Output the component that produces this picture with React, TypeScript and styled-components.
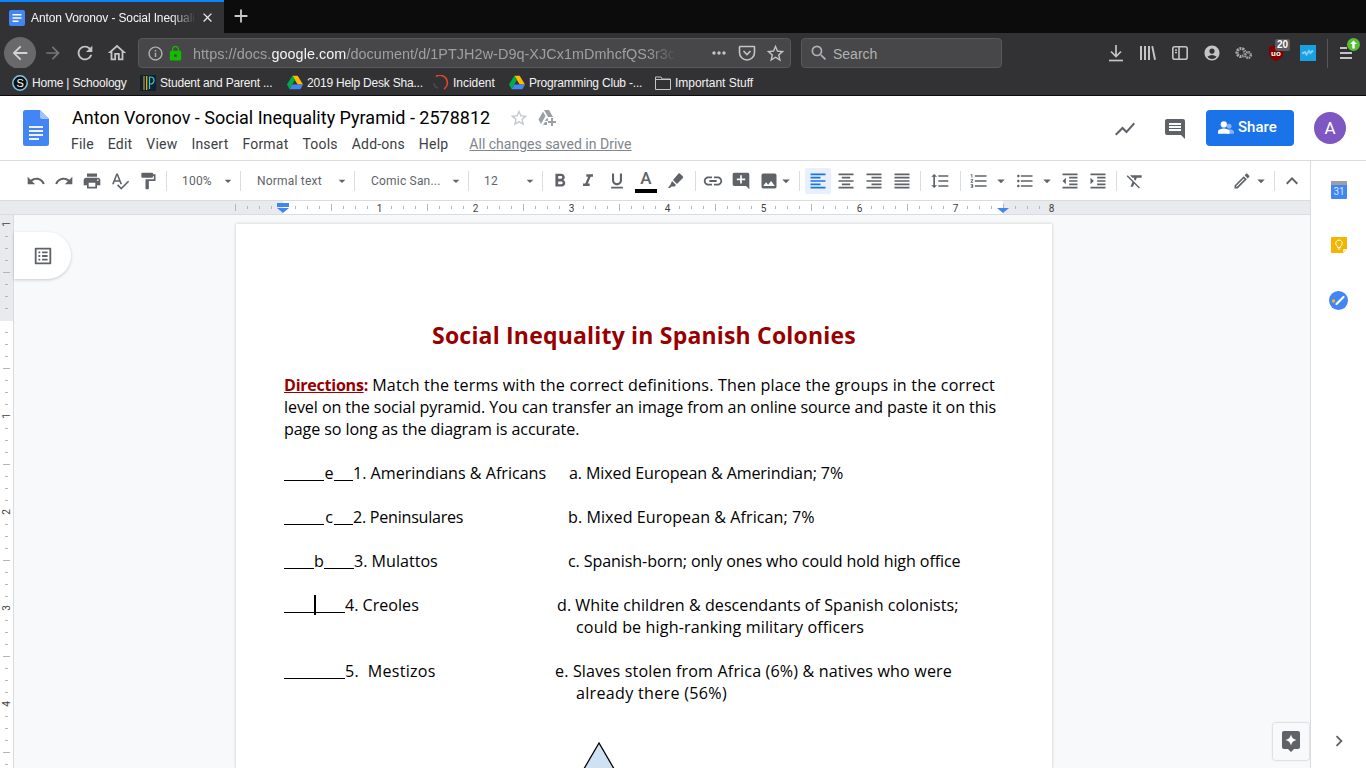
import React from "react";
import styled, { createGlobalStyle } from "styled-components";
import {
  MdArrowBack,
  MdArrowForward,
  MdRefresh,
  MdOutlineHome,
  MdInfoOutline,
  MdLock,
  MdMoreHoriz,
  MdStarBorder,
  MdSearch,
  MdAccountCircle,
  MdClose,
  MdAdd,
  MdUndo,
  MdRedo,
  MdPrint,
  MdSpellcheck,
  MdFormatPaint,
  MdFormatBold,
  MdFormatItalic,
  MdFormatUnderlined,
  MdLink,
  MdAddComment,
  MdImage,
  MdFormatAlignLeft,
  MdFormatAlignCenter,
  MdFormatAlignRight,
  MdFormatAlignJustify,
  MdFormatLineSpacing,
  MdFormatListNumbered,
  MdFormatListBulleted,
  MdFormatIndentDecrease,
  MdFormatIndentIncrease,
  MdFormatClear,
  MdOutlineEdit,
  MdExpandLess,
  MdShowChart,
  MdInsertComment,
  MdArrowDropDown,
  MdOutlineListAlt,
  MdChevronRight,
} from "react-icons/md";

const GlobalStyle = createGlobalStyle`
  html, body {
    margin: 0;
    padding: 0;
    height: 768px;
    overflow: hidden;
    background: #f8f9fa;
  }
  #root {
    height: 768px;
  }
`;

const Shell = styled.div`
  width: 1366px;
  height: 768px;
  display: flex;
  flex-direction: column;
  overflow: hidden;
`;

/* browser chrome */

const TabStrip = styled.div`
  height: 33px;
  background: #0c0c0d;
  display: flex;
  align-items: stretch;
  flex: none;
`;

const ActiveTab = styled.div`
  width: 224px;
  background: #323234;
  border-top: 2px solid #0a84ff;
  box-sizing: border-box;
  display: flex;
  align-items: center;
  padding-left: 9px;
  color: #f5f5f5;
  font: 12px "Liberation Sans", sans-serif;
`;

const TabTitle = styled.span`
  margin-left: 6px;
  width: 165px;
  flex: none;
  white-space: nowrap;
  letter-spacing: -0.12px;
  mask-image: linear-gradient(to right, #000 85%, transparent 100%);
`;

const TabClose = styled.span`
  display: flex;
  margin-left: 4px;
  color: #e8e8e8;
`;

const NewTab = styled.span`
  display: flex;
  align-items: center;
  margin: -2px 0 0 6px;
  color: #c8c8c8;
`;

const NavBar = styled.div`
  height: 35px;
  background: #323234;
  display: flex;
  align-items: flex-start;
  padding: 5px 0 0 4px;
  box-sizing: border-box;
  flex: none;
`;

const BackCircle = styled.span`
  width: 32px;
  height: 32px;
  margin-right: 1px;
  margin-top: -1px;
  border-radius: 50%;
  background: #69696b;
  color: #d4d4d6;
  display: flex;
  align-items: center;
  justify-content: center;
  flex: none;
`;

const ChromeSlot = styled.span<{ $dim?: boolean }>`
  position: relative;
  width: 32px;
  height: 30px;
  display: flex;
  align-items: center;
  justify-content: center;
  flex: none;
  color: ${(p) => (p.$dim ? "#77777a" : "#c4c4c6")};
`;

const UrlBar = styled.div`
  width: 653px;
  height: 30px;
  margin-left: 5px;
  background: #474749;
  border: 1px solid #59595b;
  border-radius: 4px;
  box-sizing: border-box;
  display: flex;
  align-items: center;
  padding-left: 8px;
  flex: none;
  color: #b1b1b3;
`;

const LockIcon = styled.span`
  display: flex;
  margin-left: 3px;
  color: #12bc00;
`;

const UrlText = styled.span`
  width: 484px;
  flex: none;
  margin-left: 9px;
  padding-top: 1px;
  font: 14.4px "Liberation Sans", sans-serif;
  letter-spacing: 0.06px;
  color: #a0a0a2;
  white-space: nowrap;
  mask-image: linear-gradient(to right, #000 94%, transparent 100%);

  b {
    color: #f4f4f4;
    font-weight: 400;
  }
`;

const PageActions = styled.span`
  display: flex;
  align-items: center;
  gap: 9px;
  margin-left: auto;
  padding-right: 4px;
  color: #c4c4c6;
`;

const SearchBox = styled.div`
  width: 201px;
  height: 30px;
  margin-left: 10px;
  background: #474749;
  border: 1px solid #59595b;
  border-radius: 4px;
  box-sizing: border-box;
  display: flex;
  align-items: center;
  gap: 4px;
  padding-left: 7px;
  flex: none;
  color: #b1b1b3;
  font: 14px "Liberation Sans", sans-serif;

  span {
    padding-top: 1px;
  }
`;

const NavRight = styled.div`
  display: flex;
  margin-left: 98px;
`;

const NavSep = styled.span`
  width: 1px;
  height: 34px;
  margin: 1px 3px 0;
  background: #58585a;
`;

const UpdateBadge = styled.span`
  position: absolute;
  top: 0;
  right: 3px;
  display: flex;
`;

const CountBadge = styled.span`
  position: absolute;
  top: 1px;
  right: 2px;
  padding: 0 2px;
  height: 12px;
  border-radius: 2px;
  background: #5b5b5d;
  color: #fff;
  font: bold 10px/12px "Liberation Sans", sans-serif;
`;

const BookmarkBar = styled.div`
  height: 28px;
  background: #323234;
  border-bottom: 1px solid #0c0c0d;
  box-sizing: border-box;
  display: flex;
  align-items: center;
  padding: 2px 0 0 12px;
  flex: none;
`;

const Bookmark = styled.span<{ $w: number; $tight?: boolean }>`
  width: ${(p) => p.$w}px;
  display: flex;
  align-items: center;
  gap: 4px;
  flex: none;
  white-space: nowrap;
  color: #f2f2f2;
  letter-spacing: ${(p) => (p.$tight ? "-0.2px" : "-0.03px")};
  font: 12px "Liberation Sans", sans-serif;
`;

/* docs header */

const DocHeader = styled.header`
  height: 65px;
  background: #fff;
  border-bottom: 1px solid #dadce0;
  box-sizing: border-box;
  display: flex;
  flex: none;
`;

const LogoSlot = styled.div`
  width: 72px;
  padding: 14px 0 0 23px;
  box-sizing: border-box;
  flex: none;
`;

const TitleCol = styled.div`
  padding-top: 10px;
`;

const TitleRow = styled.div`
  display: flex;
  align-items: center;
  height: 24px;
`;

const DocTitle = styled.div`
  font: 18px/24px Roboto, sans-serif;
  color: #000;
  white-space: nowrap;
`;

const TitleIcons = styled.span`
  display: flex;
  align-items: center;
  gap: 9px;
  margin-left: 19px;
  color: #c4c7c9;
`;

const MenuRow = styled.nav`
  display: flex;
  align-items: center;
  gap: 14px;
  margin-top: 4px;
  margin-left: -1px;
  font: 14px/20px Roboto, sans-serif;
  letter-spacing: 0.2px;
  color: #3c4043;
`;

const SavedNote = styled.span`
  margin-left: 7px;
  letter-spacing: 0;
  color: #80868b;
  text-decoration: underline;
`;

const HeaderRight = styled.div`
  margin-left: auto;
  display: flex;
  align-items: flex-start;
  padding-top: 14px;
  color: #5f6368;
`;

const HeaderIcon = styled.span`
  width: 50px;
  height: 36px;
  display: flex;
  align-items: center;
  justify-content: center;
  margin-top: 1px;
`;

const ShareButton = styled.button`
  width: 88px;
  height: 36px;
  margin-left: 6px;
  border: 0;
  border-radius: 4px;
  background: #1a73e8;
  color: #fff;
  display: flex;
  align-items: center;
  gap: 4px;
  font: 500 15px Roboto, sans-serif;
  padding: 0 0 2px 12px;
`;

const Avatar = styled.span`
  width: 32px;
  height: 32px;
  margin: 2px 20px 0 20px;
  border-radius: 50%;
  background: #7e57c2;
  color: #fff;
  display: flex;
  align-items: center;
  justify-content: center;
  font: 17px Roboto, sans-serif;
`;

/* body row */

const BodyRow = styled.div`
  flex: 1;
  min-height: 0;
  display: flex;
`;

const EditorCol = styled.div`
  width: 1310px;
  display: flex;
  flex-direction: column;
  flex: none;
  min-height: 0;
`;

const SidePanel = styled.aside`
  position: relative;
  flex: 1;
  background: #fff;
  border-left: 1px solid #dadce0;
  display: flex;
  flex-direction: column;
  align-items: center;
  gap: 38px;
  padding-top: 20px;
  box-sizing: border-box;
`;

const SideChevron = styled.span`
  position: absolute;
  top: 569px;
  left: 17px;
  display: flex;
  color: #5f6368;
`;

const Toolbar = styled.div`
  height: 40px;
  background: #fff;
  border-bottom: 1px solid #dadce0;
  box-sizing: border-box;
  display: flex;
  align-items: center;
  padding: 1px 0 0 22px;
  color: #5f6368;
  flex: none;
`;

const ToolButton = styled.span<{ $w?: number }>`
  position: relative;
  width: ${(p) => p.$w ?? 28}px;
  height: 26px;
  display: flex;
  align-items: center;
  justify-content: center;
  flex: none;
  color: #5f6368;
`;

const ActiveButton = styled(ToolButton)`
  width: 26px;
  margin: 0 1px 0 2px;
  border-radius: 2px;
  background: #e8f0fe;
  color: #1a73e8;
`;

const SplitButton = styled.span<{ $w: number; $gap: number }>`
  width: ${(p) => p.$w}px;
  height: 26px;
  display: flex;
  align-items: center;
  justify-content: flex-end;
  flex: none;
  color: #5f6368;

  svg + svg {
    margin-left: ${(p) => p.$gap}px;
  }
`;

const ToolSep = styled.span`
  width: 1px;
  height: 20px;
  margin: 0 3px 0 4px;
  background: #dadce0;
  flex: none;
`;

const ToolSelect = styled.span<{ $w: number; $pad?: number }>`
  width: ${(p) => p.$w}px;
  height: 26px;
  padding-left: ${(p) => p.$pad ?? 12}px;
  box-sizing: border-box;
  display: flex;
  align-items: center;
  justify-content: space-between;
  flex: none;
  font: 12px Roboto, sans-serif;
  letter-spacing: 0.2px;
  color: #5f6368;
`;

const Caret = styled.span`
  display: flex;
  width: 16px;
  justify-content: center;
  color: #5f6368;
`;

const ColorGlyph = styled.span`
  font: 500 17px/18px Roboto, sans-serif;
  color: #5f6368;
  margin-top: -6px;
`;

const ColorBar = styled.span`
  position: absolute;
  left: 4px;
  right: 4px;
  bottom: 1px;
  height: 4px;
  background: #000;
`;

const ToolRight = styled.div`
  margin-left: auto;
  display: flex;
  align-items: center;
  padding-right: 4px;
`;

const RulerRow = styled.div`
  height: 14px;
  flex: none;
  border-bottom: 1px solid #dadce0;
  box-sizing: border-box;
  background: linear-gradient(
    to right,
    #e8eaed 283px,
    #fff 283px,
    #fff 1003px,
    #e8eaed 1003px
  );

  svg {
    display: block;
  }
`;

const Workspace = styled.div`
  position: relative;
  flex: 1;
  min-height: 0;
  display: flex;
  background: #f8f9fa;
  overflow: hidden;
`;

const SideRuler = styled.div`
  width: 14px;
  flex: none;
  background: linear-gradient(to bottom, #e8eaed 106px, #fff 106px);
  border-right: 1px solid #dadce0;
  box-sizing: border-box;

  svg {
    display: block;
  }
`;

const OutlineTab = styled.div`
  position: absolute;
  top: 17px;
  left: 14px;
  width: 57px;
  height: 47px;
  border-radius: 0 24px 24px 0;
  background: #fff;
  box-shadow: 0 1px 3px rgba(60, 64, 67, 0.25);
  display: flex;
  align-items: center;
  justify-content: center;
  color: #5f6368;
`;

const ExploreButton = styled.div`
  position: absolute;
  right: 1px;
  bottom: 8px;
  width: 36px;
  height: 37px;
  border-radius: 2px;
  background: #f8f9fa;
  box-shadow: 0 0 2px rgba(60, 64, 67, 0.45);
  display: flex;
  align-items: center;
  justify-content: center;
`;

/* the document */

const Page = styled.main`
  width: 816px;
  margin: 9px 0 0 222px;
  padding: 96px 48px 0;
  box-sizing: border-box;
  background: #fff;
  box-shadow: 0 0 3px rgba(60, 64, 67, 0.25);
  flex: none;
  font: 16.1px/22px "Open Sans", sans-serif;
  color: #000;
  white-space: nowrap;
`;

const DocHeading = styled.h1`
  margin: 0 0 24px;
  text-align: center;
  font: bold 23px/30px "Open Sans", sans-serif;
  letter-spacing: 0.19px;
  color: #980000;
`;

const Paragraph = styled.p`
  margin: 0 0 22px;
`;

const DirectionsLabel = styled.span`
  color: #980000;
  font-weight: 700;
  letter-spacing: -0.27px;

  u {
    text-decoration-thickness: 1px;
  }
`;

/* the reference sets this in a wider face, so each run is fitted to its width */
const Fit = styled.span<{ $ls: number }>`
  letter-spacing: ${(p) => p.$ls}px;
`;

const MatchRow = styled.div`
  display: flex;
  margin-bottom: 22px;
`;

const TermCell = styled.div`
  width: 271px;
  flex: none;
`;

const DefinitionCell = styled.div<{ $indent: number }>`
  padding-left: 21px;
  text-indent: ${(p) => p.$indent}px;
`;

const Blank = styled.span<{ $w: number }>`
  position: relative;
  display: inline-block;
  width: ${(p) => p.$w}px;
  height: 18px;
  border-bottom: 1px solid #000;
  vertical-align: top;
`;

const Answer = styled.span<{ $w: number }>`
  display: inline-block;
  width: ${(p) => p.$w}px;
  text-align: center;
  vertical-align: top;
`;

const TextCursor = styled.span`
  position: absolute;
  left: 30px;
  top: 1px;
  width: 2px;
  height: 20px;
  background: #000;
`;

const PyramidWrap = styled.div`
  margin: 38px 0 0 255px;

  svg {
    display: block;
  }
`;

const DriveLogo = () => (
  <svg width="16" height="15" viewBox="0 0 24 22">
    <path d="M8 1h8l8 13h-8z" fill="#ffba00" />
    <path d="M8 1 0 14l4 7 8-14z" fill="#00ac47" />
    <path d="m4 21 4-7h16l-4 7z" fill="#4285f4" />
  </svg>
);

const horizontalRuler = () => {
  const ticks = [];
  for (let i = 0; i <= 68; i++) {
    const x = 235 + i * 12;
    if (i % 8 === 4) {
      const n = (i - 4) / 8;
      if (n > 0) {
        ticks.push(
          <text key={i} x={x + 0.5} y={11} fontSize="10" textAnchor="middle" fontFamily="Roboto, sans-serif" fill="#3c4043">
            {n}
          </text>
        );
      }
    } else if (i % 8 === 0) {
      ticks.push(<rect key={i} x={x} y={3} width="1" height="7" fill="#b4b7ba" />);
    } else {
      ticks.push(<rect key={i} x={x} y={5} width="1" height="3" fill="#b4b7ba" />);
    }
  }
  return ticks;
};

const verticalRuler = () => {
  const ticks = [];
  for (let i = 0; i <= 46; i++) {
    const y = 9 + i * 12;
    if (i % 8 === 0) {
      const n = i === 0 ? 1 : i / 8 - 1;
      if (n > 0) {
        ticks.push(
          <text
            key={i}
            x={7}
            y={y + 3}
            fontSize="10"
            textAnchor="middle"
            fontFamily="Roboto, sans-serif"
            fill="#3c4043"
            transform={`rotate(-90 7 ${y})`}
          >
            {n}
          </text>
        );
      }
    } else if (i % 8 === 4) {
      ticks.push(<rect key={i} x={3} y={y} width="7" height="1" fill="#b4b7ba" />);
    } else {
      ticks.push(<rect key={i} x={5} y={y} width="3" height="1" fill="#b4b7ba" />);
    }
  }
  return ticks;
};

export default function App() {
  return (
    <Shell>
      <GlobalStyle />
      <TabStrip>
        <ActiveTab>
          <svg width="16" height="16" viewBox="0 0 16 16">
            <rect width="16" height="16" rx="2" fill="#4285f4" />
            <path d="M3.5 4h9v1.600h-9zM3.500 7.200h9v1.600h-9zM3.500 10.400h6v1.600h-6z" fill="#fff" />
          </svg>
          <TabTitle>Anton Voronov - Social Inequali</TabTitle>
          <TabClose>
            <MdClose size={15} />
          </TabClose>
        </ActiveTab>
        <NewTab>
          <MdAdd size={22} />
        </NewTab>
      </TabStrip>

      <NavBar>
        <BackCircle>
          <MdArrowBack size={22} />
        </BackCircle>
        <ChromeSlot $dim>
          <MdArrowForward size={20} />
        </ChromeSlot>
        <ChromeSlot>
          <MdRefresh size={22} />
        </ChromeSlot>
        <ChromeSlot>
          <MdOutlineHome size={22} />
        </ChromeSlot>
        <UrlBar>
          <MdInfoOutline size={17} />
          <LockIcon>
            <MdLock size={17} />
          </LockIcon>
          <UrlText>
            https://docs.<b>google.com</b>/document/d/1PTJH2w-D9q-XJCx1mDmhcfQS3r3c
          </UrlText>
          <PageActions>
            <MdMoreHoriz size={20} />
            <svg width="18" height="18" viewBox="0 0 18 18" fill="none" stroke="#c4c4c6" strokeWidth="1.6">
              <path d="M2 2.500h14a.5.5 0 0 1 .5.5v5.500a7.500 7.500 0 0 1-15 0V3a.5.5 0 0 1 .5-.5z" />
              <path d="m5.500 7 3.500 3.500L12.500 7" />
            </svg>
            <MdStarBorder size={21} />
          </PageActions>
        </UrlBar>
        <SearchBox>
          <MdSearch size={20} />
          <span>Search</span>
        </SearchBox>
        <NavRight>
          <ChromeSlot>
            <svg width="16" height="18" viewBox="0 0 16 18" fill="none" stroke="#c4c4c6" strokeWidth="1.7">
              <path d="M8 1v11M3 7.500l5 5 5-5" />
              <path d="M1 16.500h14" />
            </svg>
          </ChromeSlot>
          <ChromeSlot>
            <svg width="16" height="14" viewBox="0 0 16 14" fill="#c4c4c6">
              <path d="M0 0h2v14H0zM4 0h2v14H4zM8 0h2v14H8zM11.300.4l1.800-.6L16 13.500l-1.900.5z" />
            </svg>
          </ChromeSlot>
          <ChromeSlot>
            <svg width="16" height="14" viewBox="0 0 16 14" fill="none" stroke="#c4c4c6" strokeWidth="1.6">
              <rect x="0.8" y="0.8" width="14.4" height="12.4" rx="2" />
              <path d="M7 1v12M3 4h2M3 6.500h2" />
            </svg>
          </ChromeSlot>
          <ChromeSlot>
            <MdAccountCircle size={18} />
          </ChromeSlot>
          <ChromeSlot>
            <svg width="18" height="14" viewBox="0 0 18 14" fill="none" stroke="#a8a8aa">
              <circle cx="6" cy="6.500" r="4" strokeWidth="3" strokeDasharray="2 0.8" />
              <circle cx="13" cy="9" r="4.600" fill="#323234" stroke="none" />
              <circle cx="13" cy="9" r="2.800" strokeWidth="2.400" strokeDasharray="1.500 0.7" />
            </svg>
          </ChromeSlot>
          <ChromeSlot>
            <svg width="14" height="16" viewBox="0 0 14 16">
              <path d="M0 1.500 7 0l7 1.500V9c0 3-3 5.500-7 7-4-1.500-7-4-7-7z" fill="#800000" />
              <text x="7" y="10.500" fontSize="8" fontWeight="700" textAnchor="middle" fontFamily="Liberation Sans, sans-serif" fill="#fff">
                uo
              </text>
            </svg>
            <CountBadge>20</CountBadge>
          </ChromeSlot>
          <ChromeSlot>
            <svg width="16" height="16" viewBox="0 0 16 16">
              <rect width="16" height="16" fill="#1a9fe0" />
              <path d="M2 8.500 5 7l1.500 2.500L9 6l1.500 2L13 5.500" fill="none" stroke="#7fd0f5" strokeWidth="2" />
            </svg>
          </ChromeSlot>
          <NavSep />
          <ChromeSlot>
            <svg width="14" height="12" viewBox="0 0 14 12" fill="#c4c4c6">
              <path d="M0 0h7v2H0zM0 5h12v2H0zM0 10h12v2H0z" />
            </svg>
            <UpdateBadge>
              <svg width="13" height="13" viewBox="0 0 13 13">
                <circle cx="6.500" cy="6.500" r="6.500" fill="#57bd35" />
                <path d="M6.500 2.500 10 6H7.700v4.500H5.300V6H3z" fill="#fff" />
              </svg>
            </UpdateBadge>
          </ChromeSlot>
        </NavRight>
      </NavBar>

      <BookmarkBar>
        <Bookmark $w={128} $tight>
          <svg width="16" height="16" viewBox="0 0 16 16">
            <circle cx="8" cy="8" r="7.200" fill="#111" stroke="#7cc8ee" strokeWidth="1.500" />
            <text x="8" y="12" fontSize="11" textAnchor="middle" fontFamily="Liberation Sans, sans-serif" fill="#fff">
              S
            </text>
          </svg>
          Home | Schoology
        </Bookmark>
        <Bookmark $w={147} $tight>
          <svg width="16" height="16" viewBox="0 0 16 16">
            <rect width="16" height="16" fill="#0b2530" />
            <path d="M4 1v14" stroke="#e8862c" strokeWidth="1.200" />
            <path d="M6.700 1v14" stroke="#e2c22c" strokeWidth="1.200" />
            <path d="M9.500 14V2h1a3.500 3.500 0 0 1 0 7h-1" fill="none" stroke="#4cc3c8" strokeWidth="1.200" />
          </svg>
          Student and Parent ...
        </Bookmark>
        <Bookmark $w={146} $tight>
          <DriveLogo />
          2019 Help Desk Sha...
        </Bookmark>
        <Bookmark $w={76}>
          <svg width="16" height="16" viewBox="0 0 16 16" fill="none">
            <path d="M3 1.500a7 7 0 0 1 8 12.500" stroke="#e2452b" strokeWidth="1.600" />
            <path d="M1 8a5 5 0 0 0 4 5" stroke="#4b4b4d" strokeWidth="1.600" />
          </svg>
          Incident
        </Bookmark>
        <Bookmark $w={146} $tight>
          <DriveLogo />
          Programming Club -...
        </Bookmark>
        <Bookmark $w={100}>
          <svg width="16" height="14" viewBox="0 0 16 14" fill="none" stroke="#c4c4c6">
            <path d="M.5 13.500V1h5.500l1.200 2H15.500v10.500zM.5 3.500H15" />
          </svg>
          Important Stuff
        </Bookmark>
      </BookmarkBar>

      <DocHeader>
        <LogoSlot>
          <svg width="26" height="36" viewBox="0 0 26 36">
            <path d="M2.500 0H17l9 9v24.500a2.500 2.500 0 0 1-2.500 2.500h-21A2.500 2.500 0 0 1 0 33.500v-31A2.500 2.500 0 0 1 2.500 0z" fill="#4285f4" />
            <path d="M17 0l9 9h-7a2 2 0 0 1-2-2z" fill="#a1c2fa" />
            <path d="M6 16h14v2H6zM6 20h14v2H6zM6 24h14v2H6zM6 28h10v2H6z" fill="#f1f1f1" />
          </svg>
        </LogoSlot>
        <TitleCol>
          <TitleRow>
            <DocTitle>Anton Voronov - Social Inequality Pyramid - 2578812</DocTitle>
            <TitleIcons>
              <MdStarBorder size={20} />
              <svg width="18" height="16" viewBox="0 0 18 16" fill="#9aa0a6">
                <path d="M6 0h5l4 7h-5zM5 1.500 7.500 6 3 14 .5 9.500zM8.500 8.500H10V11H7zM5 15l2-3h2v3z" />
                <path d="M13 8h2v3h3v2h-3v3h-2v-3h-3v-2h3z" />
              </svg>
            </TitleIcons>
          </TitleRow>
          <MenuRow>
            <span>File</span>
            <span>Edit</span>
            <span>View</span>
            <span>Insert</span>
            <span>Format</span>
            <span>Tools</span>
            <span>Add-ons</span>
            <span>Help</span>
            <SavedNote>All changes saved in Drive</SavedNote>
          </MenuRow>
        </TitleCol>
        <HeaderRight>
          <HeaderIcon>
            <MdShowChart size={24} />
          </HeaderIcon>
          <HeaderIcon>
            <MdInsertComment size={24} />
          </HeaderIcon>
          <ShareButton>
            <svg width="16" height="13" viewBox="0 0 18 14">
              <circle cx="12.500" cy="5.500" r="2.800" fill="#8ab4f8" />
              <path d="M10 14c0-3 1-5 3-5s5 1.500 5 3v2z" fill="#8ab4f8" />
              <circle cx="6.500" cy="3.500" r="3.500" fill="#fff" />
              <path d="M0 14v-2.500C0 9 4 8 6.500 8S13 9 13 11.500V14z" fill="#fff" />
            </svg>
            Share
          </ShareButton>
          <Avatar>A</Avatar>
        </HeaderRight>
      </DocHeader>

      <BodyRow>
        <EditorCol>
          <Toolbar>
            <ToolButton><MdUndo size={20} /></ToolButton>
            <ToolButton><MdRedo size={20} /></ToolButton>
            <ToolButton><MdPrint size={20} /></ToolButton>
            <ToolButton><MdSpellcheck size={20} /></ToolButton>
            <ToolButton><MdFormatPaint size={20} /></ToolButton>
            <ToolSep />
            <ToolSelect $w={66}>100%<Caret><MdArrowDropDown size={20} /></Caret></ToolSelect>
            <ToolSep />
            <ToolSelect $w={106} $pad={13}>Normal text<Caret><MdArrowDropDown size={20} /></Caret></ToolSelect>
            <ToolSep />
            <ToolSelect $w={106} $pad={13}>Comic San...<Caret><MdArrowDropDown size={20} /></Caret></ToolSelect>
            <ToolSep />
            <ToolSelect $w={66}>12<Caret><MdArrowDropDown size={20} /></Caret></ToolSelect>
            <ToolSep />
            <ToolButton><MdFormatBold size={22} /></ToolButton>
            <ToolButton><MdFormatItalic size={20} /></ToolButton>
            <ToolButton $w={29}><MdFormatUnderlined size={20} /></ToolButton>
            <ToolButton $w={30}>
              <ColorGlyph>A</ColorGlyph>
              <ColorBar />
            </ToolButton>
            <ToolButton $w={30}>
              <svg width="18" height="18" viewBox="0 0 18 18" fill="#5f6368">
                <path d="M11.500 1.500a1 1 0 0 1 1.400 0l3 3a1 1 0 0 1 0 1.400L10 12 6 8z" />
                <path d="M5 9l4 4-1.500 1.500H4.500L3 16H1l2.500-3.500z" />
              </svg>
            </ToolButton>
            <ToolSep />
            <ToolButton><MdLink size={22} /></ToolButton>
            <ToolButton><MdAddComment size={20} /></ToolButton>
            <SplitButton $w={40} $gap={-2}>
              <MdImage size={20} />
              <MdArrowDropDown size={18} />
            </SplitButton>
            <ToolSep />
            <ActiveButton><MdFormatAlignLeft size={20} /></ActiveButton>
            <ToolButton><MdFormatAlignCenter size={20} /></ToolButton>
            <ToolButton><MdFormatAlignRight size={20} /></ToolButton>
            <ToolButton><MdFormatAlignJustify size={20} /></ToolButton>
            <ToolSep />
            <ToolButton $w={32}><MdFormatLineSpacing size={20} /></ToolButton>
            <ToolSep />
            <SplitButton $w={46} $gap={3}>
              <MdFormatListNumbered size={20} />
              <MdArrowDropDown size={18} />
            </SplitButton>
            <SplitButton $w={46} $gap={3}>
              <MdFormatListBulleted size={20} />
              <MdArrowDropDown size={18} />
            </SplitButton>
            <ToolButton><MdFormatIndentDecrease size={20} /></ToolButton>
            <ToolButton><MdFormatIndentIncrease size={20} /></ToolButton>
            <ToolSep />
            <ToolButton $w={30}><MdFormatClear size={20} /></ToolButton>
            <ToolRight>
              <SplitButton $w={40} $gap={0}>
                <MdOutlineEdit size={20} />
                <MdArrowDropDown size={18} />
              </SplitButton>
              <ToolSep />
              <ToolButton><MdExpandLess size={24} /></ToolButton>
            </ToolRight>
          </Toolbar>

          <RulerRow>
            <svg width="1310" height="13" viewBox="0 0 1310 13">
              {horizontalRuler()}
              <rect x="277" y="2" width="12" height="4" fill="#4285f4" />
              <path d="M277 7h12l-6 5z" fill="#4285f4" />
              <path d="M997 7h12l-6 5z" fill="#4285f4" />
            </svg>
          </RulerRow>

          <Workspace>
            <SideRuler>
              <svg width="13" height="553" viewBox="0 0 13 553">
                {verticalRuler()}
              </svg>
            </SideRuler>
            <Page>
              <DocHeading>Social Inequality in Spanish Colonies</DocHeading>
              <Paragraph>
                <DirectionsLabel>
                  <u>Directions</u>:
                </DirectionsLabel>{" "}
                <Fit $ls={0.17}>Match the terms with the correct definitions. Then place the groups in the correct</Fit>
                <br />
                <Fit $ls={-0.09}>level on the social pyramid. You can transfer an image from an online source and paste it on this</Fit>
                <br />
                <Fit $ls={-0.1}>page so long as the diagram is accurate.</Fit>
              </Paragraph>
              <MatchRow>
                <TermCell>
                  <Blank $w={40} /><Answer $w={10}>e</Answer><Blank $w={19} />1. Amerindians &amp; Africans
                </TermCell>
                <DefinitionCell $indent={-7}>
                  <Fit $ls={-0.13}>a. Mixed European &amp; Amerindian; 7%</Fit>
                </DefinitionCell>
              </MatchRow>
              <MatchRow>
                <TermCell>
                  <Blank $w={40} /><Answer $w={10}>c</Answer><Blank $w={19} />
                  <Fit $ls={-0.25}>2. Peninsulares</Fit>
                </TermCell>
                <DefinitionCell $indent={-8}>
                  <Fit $ls={0.06}>b. Mixed European &amp; African; 7%</Fit>
                </DefinitionCell>
              </MatchRow>
              <MatchRow>
                <TermCell>
                  <Blank $w={30} /><Answer $w={10}>b</Answer><Blank $w={30} />3. Mulattos
                </TermCell>
                <DefinitionCell $indent={-8}>
                  <Fit $ls={-0.11}>c. Spanish-born; only ones who could hold high office</Fit>
                </DefinitionCell>
              </MatchRow>
              <MatchRow>
                <TermCell>
                  <Blank $w={61}>
                    <TextCursor />
                  </Blank>
                  4. Creoles
                </TermCell>
                <DefinitionCell $indent={-19}>
                  <Fit $ls={0.04}>d. White children &amp; descendants of Spanish colonists;</Fit>
                  <br />
                  <Fit $ls={0.13}>could be high-ranking military officers</Fit>
                </DefinitionCell>
              </MatchRow>
              <MatchRow>
                <TermCell>
                  <Blank $w={61} />
                  <Fit $ls={0.25}>5.&nbsp; Mestizos</Fit>
                </TermCell>
                <DefinitionCell $indent={-21}>
                  <Fit $ls={0.15}>e. Slaves stolen from Africa (6%) &amp; natives who were</Fit>
                  <br />
                  <Fit $ls={0.3}>already there (56%)</Fit>
                </DefinitionCell>
              </MatchRow>
              <PyramidWrap>
                <svg width="120" height="80" viewBox="0 0 120 80">
                  <path d="M60 1 14 80h92z" fill="#cfe2f3" stroke="#000" strokeWidth="1.300" />
                </svg>
              </PyramidWrap>
            </Page>
            <OutlineTab>
              <MdOutlineListAlt size={22} />
            </OutlineTab>
            <ExploreButton>
              <svg width="18" height="21" viewBox="0 0 18 21">
                <path d="M2 0h14a2 2 0 0 1 2 2v14a2 2 0 0 1-2 2h-4l-3 3-3-3H2a2 2 0 0 1-2-2V2a2 2 0 0 1 2-2z" fill="#5f6368" />
                <path d="M9 3.500c.6 3 2.500 4.900 5.500 5.500-3 .6-4.900 2.500-5.500 5.500-.6-3-2.500-4.900-5.500-5.500 3-.6 4.900-2.500 5.500-5.500z" fill="#fff" />
              </svg>
            </ExploreButton>
          </Workspace>
        </EditorCol>

        <SidePanel>
          <svg width="16" height="18" viewBox="0 0 16 18">
            <rect width="16" height="18" rx="1" fill="#4285f4" />
            <rect width="16" height="4" fill="#9aa0a6" />
            <text x="8" y="14" fontSize="10" textAnchor="middle" fontFamily="Roboto, sans-serif" fill="#d2e3fc">
              31
            </text>
          </svg>
          <svg width="16" height="16" viewBox="0 0 16 16">
            <path d="M1 0h14a1 1 0 0 1 1 1v11l-4 4H1a1 1 0 0 1-1-1V1a1 1 0 0 1 1-1z" fill="#f4b400" />
            <path d="M16 12l-4 4v-3a1 1 0 0 1 1-1z" fill="#fdeeb5" />
            <path d="M6.500 10.500V9.300A3.300 3.300 0 1 1 9.500 9.300v1.200zM6.800 12h2.400" fill="none" stroke="#fff" />
          </svg>
          <svg width="19" height="19" viewBox="0 0 19 19">
            <circle cx="9.500" cy="9.500" r="9.500" fill="#4285f4" />
            <circle cx="4.500" cy="10" r="1.700" fill="#fbbc04" />
            <path d="m7.500 13 7-7" stroke="#fff" strokeWidth="2.200" strokeLinecap="round" />
          </svg>
          <SideChevron>
            <MdChevronRight size={22} />
          </SideChevron>
        </SidePanel>
      </BodyRow>
    </Shell>
  );
}
